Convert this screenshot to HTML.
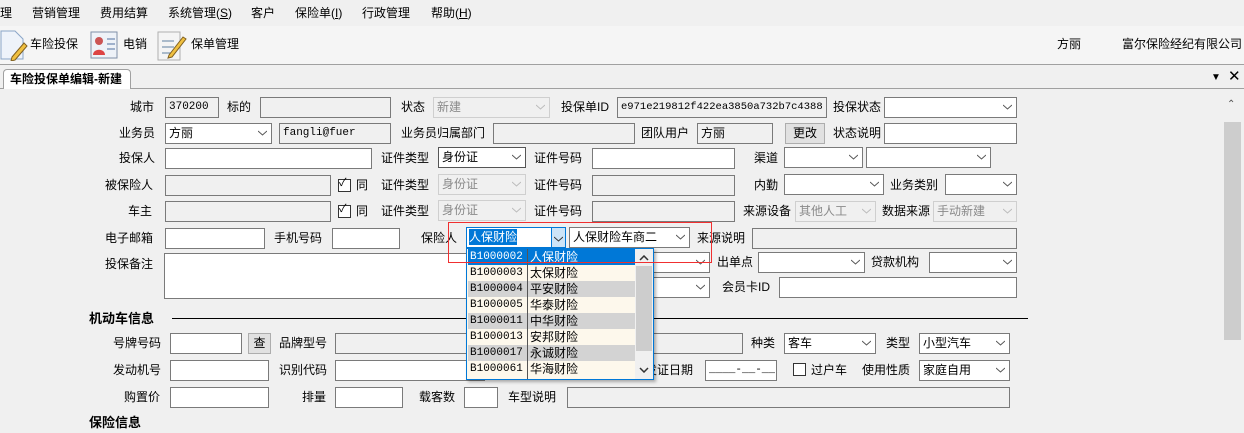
<!DOCTYPE html>
<html><head><meta charset="utf-8">
<style>
*{box-sizing:border-box;margin:0;padding:0}
body{width:1244px;height:419px;overflow:hidden;background:#f0f0f0;font-family:"Liberation Sans","Noto Sans CJK SC",sans-serif;font-size:12px;color:#000;position:relative}
div,span{position:absolute}
.t{white-space:nowrap;line-height:20px}
.b{height:21px;border:1px solid #7a7a7a;background:#fff;line-height:19px;padding-left:3px;white-space:nowrap}
.g{background:#f0f0f0}
.d{border-color:#cfcfcf;background:#f0f0f0;color:#8a8a8a}
.m{font-family:"Liberation Mono",monospace;font-size:11px}
.ch{right:4px;top:6px;width:9px;height:6px}
.cb{width:13px;height:13px;border:1px solid #333;background:#fff}
.btn{height:21px;border:1px solid #adadad;background:#e1e1e1;text-align:center;line-height:19px}
.row{left:1px;width:168px;height:16px;line-height:16px;font-size:12px}
.row .c{left:2px;font-family:"Liberation Mono",monospace;font-size:11px}
.row .n{left:62px}
</style></head><body>
<!-- menu -->
<div class="t" style="left:0;top:3px">理</div>
<div class="t" style="left:32px;top:3px">营销管理</div>
<div class="t" style="left:100px;top:3px">费用结算</div>
<div class="t" style="left:168px;top:3px">系统管理(<u>S</u>)</div>
<div class="t" style="left:251px;top:3px">客户</div>
<div class="t" style="left:295px;top:3px">保险单(<u>I</u>)</div>
<div class="t" style="left:362px;top:3px">行政管理</div>
<div class="t" style="left:431px;top:3px">帮助(<u>H</u>)</div>
<!-- toolbar -->
<div style="left:0;top:26px;width:1244px;height:39px;background:#f5f5f5;border-bottom:1px solid #a0a0a0"></div>
<svg style="position:absolute;left:0;top:29px" width="28" height="32"><path d="M1 2h14l8 8v20H1z" fill="#eef3fa" stroke="#8aa6c8"/><path d="M12 28l12-14 3 3-12 14-4 1z" fill="#f0c040" stroke="#806020"/></svg>
<div class="t" style="left:30px;top:34px">车险投保</div>
<svg style="position:absolute;left:90px;top:31px" width="28" height="28"><rect x="1" y="1" width="26" height="26" fill="#eef2f8" stroke="#8090a8"/><circle cx="9" cy="10" r="4" fill="#c55"/><path d="M3 24c0-7 12-7 12 0z" fill="#d44"/><path d="M17 8h8M17 13h8M17 18h8" stroke="#5070a0"/></svg>
<div class="t" style="left:123px;top:34px">电销</div>
<svg style="position:absolute;left:157px;top:29px" width="30" height="32"><rect x="1" y="3" width="22" height="28" fill="#f4f4f4" stroke="#b0b0b0"/><path d="M5 12h12M5 18h12M5 24h10" stroke="#6080a0"/><path d="M12 26l14-18 3 2-14 18-4 1z" fill="#f0c040" stroke="#806020"/></svg>
<div class="t" style="left:191px;top:34px">保单管理</div>
<div class="t" style="left:1057px;top:34px">方丽</div>
<div class="t" style="left:1122px;top:34px">富尔保险经纪有限公司</div>
<!-- tab -->
<div style="left:0;top:88px;width:1244px;height:1px;background:#a0a0a0"></div>
<div style="left:3px;top:69px;width:128px;height:20px;background:#fff;border:1px solid #a0a0a0;border-bottom:none;border-radius:4px 4px 0 0"></div>
<div class="t" style="left:10px;top:69px;font-weight:bold">车险投保单编辑-新建</div>
<div class="t" style="left:1211px;top:68px;font-size:10px">▼</div>
<div class="t" style="left:1228px;top:67px;font-size:15px">✕</div>
<!-- scrollbar -->
<div style="left:1223px;top:96px;width:18px;height:323px;background:#f0f0f0"></div>
<div class="t" style="left:1227px;top:95px;font-size:10px;color:#555">⌃</div>
<div style="left:1224px;top:122px;width:17px;height:218px;background:#cdcdcd"></div>

<!-- row1 -->
<div class="t" style="left:130px;top:97px">城市</div>
<div class="b g m" style="left:165px;top:97px;width:54px">370200</div>
<div class="t" style="left:227px;top:97px">标的</div>
<div class="b g" style="left:260px;top:97px;width:131px"></div>
<div class="t" style="left:401px;top:97px">状态</div>
<div class="b d" style="left:433px;top:97px;width:117px">新建<svg class="ch" style="position:absolute"><path d="M0 1l4.5 4 4.5-4" fill="none" stroke="#bbb"/></svg></div>
<div class="t" style="left:561px;top:97px">投保单ID</div>
<div class="b g m" style="left:617px;top:97px;width:210px;font-size:10.5px">e971e219812f422ea3850a732b7c4388</div>
<div class="t" style="left:833px;top:97px">投保状态</div>
<div class="b" style="left:884px;top:97px;width:133px"><svg class="ch" style="position:absolute"><path d="M0 1l4.5 4 4.5-4" fill="none" stroke="#555"/></svg></div>
<!-- row2 -->
<div class="t" style="left:119px;top:123px">业务员</div>
<div class="b" style="left:165px;top:123px;width:107px">方丽<svg class="ch" style="position:absolute"><path d="M0 1l4.5 4 4.5-4" fill="none" stroke="#555"/></svg></div>
<div class="b g m" style="left:279px;top:123px;width:112px">fangli@fuer</div>
<div class="t" style="left:401px;top:123px">业务员归属部门</div>
<div class="b g" style="left:493px;top:123px;width:142px"></div>
<div class="t" style="left:641px;top:123px">团队用户</div>
<div class="b g" style="left:697px;top:123px;width:76px">方丽</div>
<div class="btn" style="left:785px;top:123px;width:40px">更改</div>
<div class="t" style="left:833px;top:123px">状态说明</div>
<div class="b" style="left:884px;top:123px;width:133px"></div>
<!-- row3 -->
<div class="t" style="left:119px;top:148px">投保人</div>
<div class="b" style="left:165px;top:148px;width:207px"></div>
<div class="t" style="left:381px;top:148px">证件类型</div>
<div class="b" style="left:438px;top:147px;width:88px;border-color:#555">身份证<svg class="ch" style="position:absolute"><path d="M0 1l4.5 4 4.5-4" fill="none" stroke="#555"/></svg></div>
<div class="t" style="left:534px;top:148px">证件号码</div>
<div class="b" style="left:592px;top:148px;width:143px"></div>
<div class="t" style="left:754px;top:148px">渠道</div>
<div class="b" style="left:784px;top:147px;width:79px"><svg class="ch" style="position:absolute"><path d="M0 1l4.5 4 4.5-4" fill="none" stroke="#555"/></svg></div>
<div class="b" style="left:866px;top:147px;width:125px"><svg class="ch" style="position:absolute"><path d="M0 1l4.5 4 4.5-4" fill="none" stroke="#555"/></svg></div>
<!-- row4 -->
<div class="t" style="left:105px;top:175px">被保险人</div>
<div class="b g" style="left:165px;top:175px;width:166px"></div>
<div class="cb" style="left:338px;top:179px"></div><div class="t" style="left:339px;top:173px;font-size:11px">✓</div>
<div class="t" style="left:356px;top:175px">同</div>
<div class="t" style="left:381px;top:175px">证件类型</div>
<div class="b d" style="left:438px;top:174px;width:88px">身份证<svg class="ch" style="position:absolute"><path d="M0 1l4.5 4 4.5-4" fill="none" stroke="#bbb"/></svg></div>
<div class="t" style="left:534px;top:175px">证件号码</div>
<div class="b g" style="left:592px;top:175px;width:143px"></div>
<div class="t" style="left:754px;top:175px">内勤</div>
<div class="b" style="left:784px;top:174px;width:100px"><svg class="ch" style="position:absolute"><path d="M0 1l4.5 4 4.5-4" fill="none" stroke="#555"/></svg></div>
<div class="t" style="left:890px;top:175px">业务类别</div>
<div class="b" style="left:945px;top:174px;width:72px"><svg class="ch" style="position:absolute"><path d="M0 1l4.5 4 4.5-4" fill="none" stroke="#555"/></svg></div>
<!-- row5 -->
<div class="t" style="left:128px;top:201px">车主</div>
<div class="b g" style="left:165px;top:201px;width:166px"></div>
<div class="cb" style="left:338px;top:205px"></div><div class="t" style="left:339px;top:199px;font-size:11px">✓</div>
<div class="t" style="left:356px;top:201px">同</div>
<div class="t" style="left:381px;top:201px">证件类型</div>
<div class="b d" style="left:438px;top:200px;width:88px">身份证<svg class="ch" style="position:absolute"><path d="M0 1l4.5 4 4.5-4" fill="none" stroke="#bbb"/></svg></div>
<div class="t" style="left:534px;top:201px">证件号码</div>
<div class="b g" style="left:592px;top:201px;width:143px"></div>
<div class="t" style="left:743px;top:201px">来源设备</div>
<div class="b d" style="left:795px;top:201px;width:81px">其他人工<svg class="ch" style="position:absolute"><path d="M0 1l4.5 4 4.5-4" fill="none" stroke="#bbb"/></svg></div>
<div class="t" style="left:882px;top:201px">数据来源</div>
<div class="b d" style="left:933px;top:201px;width:84px">手动新建<svg class="ch" style="position:absolute"><path d="M0 1l4.5 4 4.5-4" fill="none" stroke="#bbb"/></svg></div>
<!-- row6 -->
<div class="t" style="left:105px;top:228px">电子邮箱</div>
<div class="b" style="left:165px;top:228px;width:100px"></div>
<div class="t" style="left:274px;top:228px">手机号码</div>
<div class="b" style="left:332px;top:228px;width:68px"></div>
<div class="t" style="left:421px;top:228px">保险人</div>
<div class="b" style="left:466px;top:227px;width:100px;border-color:#0078d7;padding-left:2px"><span style="left:2px;top:1px;height:16px;line-height:16px;background:#0078d7;color:#fff">人保财险</span></div>
<div style="left:551px;top:228px;width:14px;height:19px;background:#cce4f7;border-left:1px solid #0078d7"></div>
<svg style="position:absolute;left:554px;top:236px" width="9" height="6"><path d="M0 1l4.5 4 4.5-4" fill="none" stroke="#333"/></svg>
<div class="b" style="left:569px;top:227px;width:121px">人保财险车商二<svg class="ch" style="position:absolute"><path d="M0 1l4.5 4 4.5-4" fill="none" stroke="#555"/></svg></div>
<div class="t" style="left:697px;top:228px">来源说明</div>
<div class="b g" style="left:752px;top:228px;width:265px"></div>
<!-- row7/8 -->
<div class="t" style="left:105px;top:254px">投保备注</div>
<div class="b" style="left:164px;top:253px;width:320px;height:46px"></div>
<div class="b" style="left:600px;top:252px;width:110px"><svg class="ch" style="position:absolute"><path d="M0 1l4.5 4 4.5-4" fill="none" stroke="#555"/></svg></div>
<div class="t" style="left:717px;top:252px">出单点</div>
<div class="b" style="left:758px;top:252px;width:107px"><svg class="ch" style="position:absolute"><path d="M0 1l4.5 4 4.5-4" fill="none" stroke="#555"/></svg></div>
<div class="t" style="left:871px;top:252px">贷款机构</div>
<div class="b" style="left:929px;top:252px;width:88px"><svg class="ch" style="position:absolute"><path d="M0 1l4.5 4 4.5-4" fill="none" stroke="#555"/></svg></div>
<div class="b" style="left:600px;top:277px;width:110px"><svg class="ch" style="position:absolute"><path d="M0 1l4.5 4 4.5-4" fill="none" stroke="#555"/></svg></div>
<div class="t" style="left:722px;top:277px">会员卡ID</div>
<div class="b" style="left:779px;top:277px;width:238px"></div>
<!-- section -->
<div class="t" style="left:89px;top:309px;font-weight:bold;font-size:13px">机动车信息</div>
<div style="left:172px;top:318px;width:856px;height:1px;background:#000"></div>
<!-- row9 -->
<div class="t" style="left:113px;top:333px">号牌号码</div>
<div class="b" style="left:170px;top:333px;width:72px"></div>
<div class="btn" style="left:248px;top:333px;width:23px">查</div>
<div class="t" style="left:279px;top:333px">品牌型号</div>
<div class="b g" style="left:335px;top:333px;width:408px"></div>
<div class="t" style="left:751px;top:333px">种类</div>
<div class="b" style="left:784px;top:333px;width:92px">客车<svg class="ch" style="position:absolute"><path d="M0 1l4.5 4 4.5-4" fill="none" stroke="#555"/></svg></div>
<div class="t" style="left:886px;top:333px">类型</div>
<div class="b" style="left:919px;top:333px;width:91px">小型汽车<svg class="ch" style="position:absolute"><path d="M0 1l4.5 4 4.5-4" fill="none" stroke="#555"/></svg></div>
<!-- row10 -->
<div class="t" style="left:113px;top:360px">发动机号</div>
<div class="b" style="left:170px;top:360px;width:99px"></div>
<div class="t" style="left:279px;top:360px">识别代码</div>
<div class="b" style="left:335px;top:360px;width:150px"></div>
<div class="t" style="left:645px;top:360px">发证日期</div>
<div class="b m" style="left:705px;top:360px;width:72px">____-__-__</div>
<div class="cb" style="left:793px;top:363px"></div>
<div class="t" style="left:811px;top:360px">过户车</div>
<div class="t" style="left:862px;top:360px">使用性质</div>
<div class="b" style="left:919px;top:360px;width:91px">家庭自用<svg class="ch" style="position:absolute"><path d="M0 1l4.5 4 4.5-4" fill="none" stroke="#555"/></svg></div>
<!-- row11 -->
<div class="t" style="left:124px;top:387px">购置价</div>
<div class="b" style="left:170px;top:387px;width:99px"></div>
<div class="t" style="left:302px;top:387px">排量</div>
<div class="b" style="left:335px;top:387px;width:68px"></div>
<div class="t" style="left:419px;top:387px">载客数</div>
<div class="b" style="left:464px;top:387px;width:34px"></div>
<div class="t" style="left:508px;top:387px">车型说明</div>
<div class="b g" style="left:567px;top:387px;width:443px"></div>
<div class="t" style="left:89px;top:413px;font-weight:bold;font-size:13px">保险信息</div>

<!-- dropdown -->
<div style="left:466px;top:248px;width:188px;height:132px;border:1px solid #0078d7;background:#fdf8ec;box-shadow:2px 2px 3px rgba(0,0,0,.3);overflow:hidden">
 <div class="row" style="top:0;background:#0078d7;color:#fff;width:168px"><span class="c">B1000002</span><span class="n">人保财险</span></div>
 <div class="row" style="top:16px"><span class="c">B1000003</span><span class="n">太保财险</span></div>
 <div class="row" style="top:32px;background:#d3d3d3"><span class="c">B1000004</span><span class="n">平安财险</span></div>
 <div class="row" style="top:48px"><span class="c">B1000005</span><span class="n">华泰财险</span></div>
 <div class="row" style="top:64px;background:#d3d3d3"><span class="c">B1000011</span><span class="n">中华财险</span></div>
 <div class="row" style="top:80px"><span class="c">B1000013</span><span class="n">安邦财险</span></div>
 <div class="row" style="top:96px;background:#d3d3d3"><span class="c">B1000017</span><span class="n">永诚财险</span></div>
 <div class="row" style="top:112px"><span class="c">B1000061</span><span class="n">华海财险</span></div>
 <div style="left:60px;top:0;width:1px;height:132px;background:#555"></div>
 <div style="left:168px;top:0;width:18px;height:132px;background:#f0f0f0"></div>
 <div style="left:169px;top:17px;width:16px;height:85px;background:#cdcdcd"></div>
 <svg style="position:absolute;left:172px;top:6px" width="10" height="6"><path d="M1 5l4-4 4 4" fill="none" stroke="#333" stroke-width="1.5"/></svg>
 <svg style="position:absolute;left:172px;top:118px" width="10" height="6"><path d="M1 1l4 4 4-4" fill="none" stroke="#333" stroke-width="1.5"/></svg>
</div>
<!-- red box -->
<div style="left:448px;top:222px;width:264px;height:41px;border:1px solid #f03030"></div>
</body></html>
